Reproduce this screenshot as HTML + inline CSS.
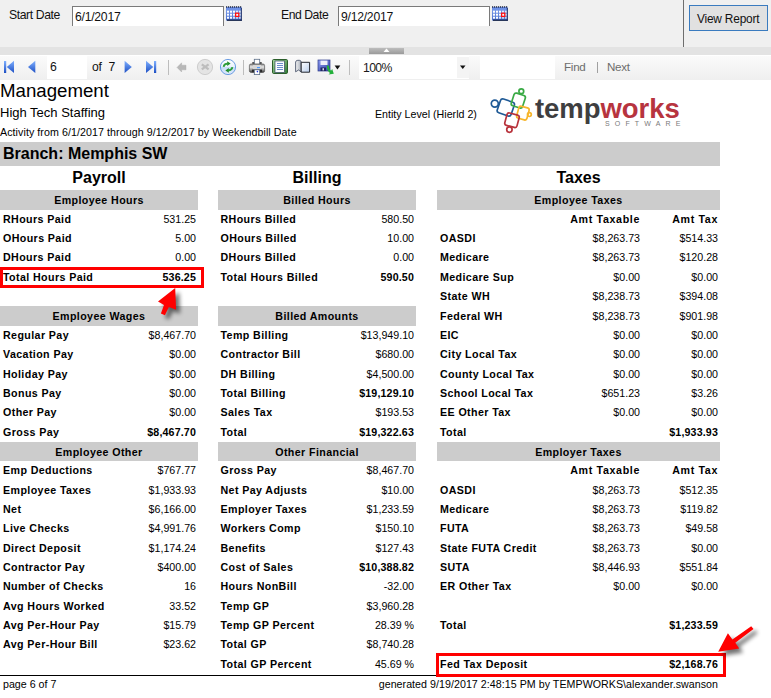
<!DOCTYPE html>
<html><head><meta charset="utf-8">
<style>
*{margin:0;padding:0;box-sizing:border-box}
html,body{width:771px;height:698px;overflow:hidden;background:#fff;font-family:"Liberation Sans",sans-serif;color:#000}
.a{position:absolute;white-space:nowrap}
#top{position:absolute;left:0;top:0;width:771px;height:47px;background:#f0f0f0}
#band{position:absolute;left:0;top:47px;width:771px;height:8px;background:#e3e3e3}
#tb{position:absolute;left:0;top:55px;width:771px;height:25px;background:linear-gradient(#fff 0,#fff 1px,#fbfbfb 1px,#efefef 100%)}
.ui{font-size:12.2px;color:#111;position:absolute;white-space:nowrap;line-height:14px;letter-spacing:-0.25px}
.inp{position:absolute;background:#fff;border:1px solid #7a7a7a;border-bottom:none}
.sep{position:absolute;width:1px;background:#c8c8c8}
.lb,.v,.hb{position:absolute;white-space:nowrap;font-size:10.67px;line-height:19.33px;height:19.33px}
.lb{font-weight:bold;letter-spacing:0.4px}
.v.b{font-weight:bold;letter-spacing:0.15px}
.v.b.h2{letter-spacing:0.65px}
.hb{background:#cccccc;font-weight:bold;text-align:center;letter-spacing:0.4px;line-height:20.6px}
.sec{position:absolute;font-weight:bold;font-size:16px;line-height:20px;text-align:center;white-space:nowrap}
.redbox{position:absolute;border:3px solid #ff0000}
</style></head><body>
<div id="top"></div>
<div id="band"></div>
<div id="tb"></div>
<!-- top params -->
<div class="ui" style="left:9px;top:8px;letter-spacing:-0.4px">Start Date</div>
<div class="inp" style="left:72px;top:6px;width:152px;height:20px"></div>
<div class="ui" style="left:75px;top:10px">6/1/2017</div>
<svg class="a" style="left:226px;top:6px" width="17" height="16" viewBox="0 0 17 16">
 <defs><linearGradient id="cg1" x1="0" y1="0" x2="0" y2="1"><stop offset="0" stop-color="#86a6ee"/><stop offset="1" stop-color="#4a70d0"/></linearGradient></defs>
 <rect x="0" y="1" width="15.5" height="13.5" fill="url(#cg1)"/>
 <rect x="0" y="1.2" width="15.5" height="2.6" fill="#6d90e6"/>
 <g fill="#101830"><rect x="0" y="0.3" width="1.2" height="1.3"/><rect x="2" y="0.3" width="1.2" height="1.3"/><rect x="4" y="0.3" width="1.2" height="1.3"/><rect x="6" y="0.3" width="1.2" height="1.3"/><rect x="8" y="0.3" width="1.2" height="1.3"/><rect x="10" y="0.3" width="1.2" height="1.3"/><rect x="12" y="0.3" width="1.2" height="1.3"/><rect x="14" y="0.3" width="1.2" height="1.3"/></g>
 <g fill="#fff"><rect x="1" y="4.7" width="2" height="2"/><rect x="4" y="4.7" width="2" height="2"/><rect x="7" y="4.7" width="2" height="2"/><rect x="10" y="4.7" width="2" height="2" opacity="0.8"/><rect x="13" y="4.7" width="2" height="2" opacity="0.8"/>
 <rect x="1" y="7.7" width="2" height="2"/><rect x="4" y="7.7" width="2" height="2"/><rect x="7" y="7.7" width="2" height="2"/><rect x="13" y="7.7" width="2" height="2" opacity="0.8"/>
 <rect x="1" y="10.7" width="2" height="2"/><rect x="4" y="10.7" width="2" height="2"/><rect x="7" y="10.7" width="2" height="2" opacity="0.8"/><rect x="10" y="10.7" width="2" height="2" opacity="0.7"/><rect x="13" y="10.7" width="2" height="2" opacity="0.7"/></g>
 <rect x="9.6" y="7.2" width="3.2" height="3.2" fill="#eef8ff" stroke="#ff1010" stroke-width="1.3"/>
 <rect x="1" y="13.6" width="14.8" height="1.2" fill="#0c1838"/>
 <rect x="14.8" y="2" width="1" height="12.8" fill="#1c2c60"/>
</svg>
<div class="ui" style="left:281px;top:8px;letter-spacing:-0.45px">End Date</div>
<div class="inp" style="left:338px;top:6px;width:152px;height:20px"></div>
<div class="ui" style="left:341px;top:10px">9/12/2017</div>
<svg class="a" style="left:492px;top:6px" width="17" height="16" viewBox="0 0 17 16">
 <defs><linearGradient id="cg2" x1="0" y1="0" x2="0" y2="1"><stop offset="0" stop-color="#86a6ee"/><stop offset="1" stop-color="#4a70d0"/></linearGradient></defs>
 <rect x="0" y="1" width="15.5" height="13.5" fill="url(#cg2)"/>
 <rect x="0" y="1.2" width="15.5" height="2.6" fill="#6d90e6"/>
 <g fill="#101830"><rect x="0" y="0.3" width="1.2" height="1.3"/><rect x="2" y="0.3" width="1.2" height="1.3"/><rect x="4" y="0.3" width="1.2" height="1.3"/><rect x="6" y="0.3" width="1.2" height="1.3"/><rect x="8" y="0.3" width="1.2" height="1.3"/><rect x="10" y="0.3" width="1.2" height="1.3"/><rect x="12" y="0.3" width="1.2" height="1.3"/><rect x="14" y="0.3" width="1.2" height="1.3"/></g>
 <g fill="#fff"><rect x="1" y="4.7" width="2" height="2"/><rect x="4" y="4.7" width="2" height="2"/><rect x="7" y="4.7" width="2" height="2"/><rect x="10" y="4.7" width="2" height="2" opacity="0.8"/><rect x="13" y="4.7" width="2" height="2" opacity="0.8"/>
 <rect x="1" y="7.7" width="2" height="2"/><rect x="4" y="7.7" width="2" height="2"/><rect x="7" y="7.7" width="2" height="2"/><rect x="13" y="7.7" width="2" height="2" opacity="0.8"/>
 <rect x="1" y="10.7" width="2" height="2"/><rect x="4" y="10.7" width="2" height="2"/><rect x="7" y="10.7" width="2" height="2" opacity="0.8"/><rect x="10" y="10.7" width="2" height="2" opacity="0.7"/><rect x="13" y="10.7" width="2" height="2" opacity="0.7"/></g>
 <rect x="9.6" y="7.2" width="3.2" height="3.2" fill="#eef8ff" stroke="#ff1010" stroke-width="1.3"/>
 <rect x="1" y="13.6" width="14.8" height="1.2" fill="#0c1838"/>
 <rect x="14.8" y="2" width="1" height="12.8" fill="#1c2c60"/>
</svg>
<div class="a" style="left:683px;top:0;width:1px;height:47px;background:#6e6e6e"></div>
<div class="a" style="left:689px;top:5px;width:79px;height:26px;background:#e1e1e1;border:1px solid #3a7bbf"></div>
<div class="ui" style="left:697px;top:11.5px;font-size:11.9px;letter-spacing:-0.2px">View Report</div>
<!-- grip -->
<div class="a" style="left:369px;top:48px;width:35px;height:6px;background:linear-gradient(#bdbdbd,#9a9a9a)"></div>
<svg class="a" style="left:383px;top:48px" width="7" height="4"><path d="M0.5 4 L3.5 0.5 L6.5 4Z" fill="#fff"/></svg>
<!-- toolbar -->
<div class="a" style="left:47px;top:55px;width:40px;height:24px;background:#fff"></div>
<div class="ui" style="left:50px;top:60px">6</div>
<div class="ui" style="left:92px;top:60px">of</div>
<div class="ui" style="left:108.5px;top:60px">7</div>
<svg class="a" style="left:0;top:55px" width="360" height="24" viewBox="0 55 360 24">
 <defs>
  <linearGradient id="bl" x1="0" y1="0" x2="0" y2="1"><stop offset="0" stop-color="#7fb0ff"/><stop offset="1" stop-color="#1d4fc4"/></linearGradient>
  <radialGradient id="rf" cx="0.5" cy="0.4" r="0.6"><stop offset="0" stop-color="#fff"/><stop offset="1" stop-color="#bcd6f5"/></radialGradient>
 </defs>
 <!-- first -->
 <rect x="4" y="61" width="2.2" height="12" fill="url(#bl)"/>
 <path d="M14 60.8 L6.8 66.9 L14 73 Z" fill="url(#bl)"/>
 <!-- prev -->
 <path d="M35.3 60.8 L28 66.9 L35.3 73 Z" fill="url(#bl)"/>
 <!-- next -->
 <path d="M124.6 60.8 L131.8 66.9 L124.6 73 Z" fill="url(#bl)"/>
 <!-- last -->
 <path d="M146 60.8 L153.3 66.9 L146 73 Z" fill="url(#bl)"/>
 <rect x="154" y="61" width="2.2" height="12" fill="url(#bl)"/>
 <rect x="168" y="60" width="1" height="15" fill="#bdbdbd"/>
 <!-- back -->
 <path d="M177 67.4 L181.6 62.8 L181.6 65.2 L186 65.2 L186 69.8 L181.6 69.8 L181.6 72 Z" fill="#b8b8b8" stroke="#a8a8a8" stroke-width="0.4"/>
 <!-- stop -->
 <circle cx="205" cy="67" r="7.6" fill="#e4e4e4" stroke="#cdcdcd" stroke-width="1"/>
 <path d="M201.8 64.4 L208.6 69.4 M208.6 64.4 L201.8 69.4" stroke="#bdbdbd" stroke-width="2.3"/>
 <!-- refresh -->
 <defs><linearGradient id="rg" x1="0" y1="0" x2="0" y2="1"><stop offset="0" stop-color="#ffffff"/><stop offset="0.5" stop-color="#e9f2fd"/><stop offset="0.5" stop-color="#c6ddf9"/><stop offset="1" stop-color="#dfeafb"/></linearGradient></defs>
 <circle cx="228" cy="67" r="7.6" fill="url(#rg)" stroke="#6b9de3" stroke-width="1"/>
 <path d="M223.6 66.8 Q224 63.8 227.6 63.6" fill="none" stroke="#2e9e3a" stroke-width="1.8"/>
 <path d="M227.2 61.2 L230.6 63.5 L227.2 65.9 Z" fill="#1f8f2c"/>
 <path d="M232.4 67.2 Q232 70.2 228.4 70.4" fill="none" stroke="#2e9e3a" stroke-width="1.8"/>
 <path d="M228.8 68 L225.4 70.4 L228.8 72.8 Z" fill="#1f8f2c"/>
 <rect x="243" y="60" width="1" height="15" fill="#bdbdbd"/>
 <!-- printer -->
 <defs><linearGradient id="pg" x1="0" y1="0" x2="0" y2="1"><stop offset="0" stop-color="#8a8a8a"/><stop offset="0.35" stop-color="#e6e6e6"/><stop offset="0.6" stop-color="#b0b0b0"/><stop offset="1" stop-color="#3a3a3a"/></linearGradient></defs>
 <rect x="252.3" y="62" width="9.4" height="3" fill="#555"/>
 <rect x="254.3" y="59.3" width="5.4" height="5" fill="#fff" stroke="#5d6f88" stroke-width="0.8"/>
 <rect x="249.4" y="64" width="15.2" height="8.4" rx="1.6" fill="url(#pg)" stroke="#555" stroke-width="0.7"/>
 <rect x="253" y="65" width="8" height="4" fill="#d8d8d8"/>
 <rect x="257" y="67" width="3" height="1.2" fill="#4f9bff"/>
 <rect x="252" y="69.6" width="10" height="2.6" fill="#2a2a2a"/>
 <rect x="254.3" y="69.8" width="5.4" height="4.8" fill="#fff" stroke="#5d6f88" stroke-width="0.8"/>
 <circle cx="257.4" cy="71.6" r="0.8" fill="#2233dd"/>
 <!-- page layout -->
 <defs><linearGradient id="gr" x1="0" y1="0" x2="1" y2="1"><stop offset="0" stop-color="#a8d8a0"/><stop offset="1" stop-color="#2f7a34"/></linearGradient>
 <linearGradient id="pb" x1="0" y1="0" x2="1" y2="1"><stop offset="0" stop-color="#ffffff"/><stop offset="1" stop-color="#b9cdeb"/></linearGradient>
 <linearGradient id="fl" x1="0" y1="0" x2="1" y2="1"><stop offset="0" stop-color="#8e9cf0"/><stop offset="1" stop-color="#3040a8"/></linearGradient></defs>
 <rect x="272.5" y="59.5" width="15" height="14" rx="1.2" fill="url(#gr)" stroke="#2b5e2b" stroke-width="1"/>
 <rect x="275" y="61" width="9.5" height="11.5" fill="#fafcff" stroke="#1f2f4f" stroke-width="0.6"/>
 <g fill="#5c80c4"><rect x="277" y="63" width="6" height="0.9"/><rect x="277" y="65" width="6" height="0.9"/><rect x="277" y="67" width="6" height="0.9"/><rect x="277" y="69" width="6" height="0.9"/></g>
 <!-- book -->
 <defs><linearGradient id="bk" x1="0" y1="0" x2="1" y2="0"><stop offset="0" stop-color="#f4f4f4"/><stop offset="1" stop-color="#a9b0bb"/></linearGradient></defs>
 <path d="M295.6 71.8 L295.6 62 Q295.9 60.3 297.8 60.3 L299.4 60.3 Q301 60.4 301.2 62 L301.2 72 L298.6 70 Z" fill="url(#bk)" stroke="#3b4660" stroke-width="0.8"/>
 <path d="M301.2 62.3 L309.6 62.3 L309.6 72.2 L301.2 72.2 Z" fill="url(#pb)" stroke="#23262e" stroke-width="1"/>
 <!-- save -->
 <rect x="318" y="60" width="12" height="11" fill="url(#fl)" stroke="#2b3a8a" stroke-width="0.7"/>
 <rect x="320.5" y="60.6" width="7" height="4.4" fill="#eef0fa"/>
 <rect x="320.5" y="67.5" width="5.5" height="3.5" fill="#1f2760"/>
 <rect x="322.5" y="68.2" width="1.5" height="2.2" fill="#d8dcf0"/>
 <path d="M326.8 65.5 L328.8 65.5 Q329 69.5 331 70.8 L332.2 69 L333.8 73.8 L328.6 74.6 L330 73 Q326.8 70.8 326.8 65.5 Z" fill="#22b03a"/>
 <path d="M334.6 65.6 L340.3 65.6 L337.45 69.4 Z" fill="#111"/>
 <rect x="349" y="60" width="1" height="15" fill="#bdbdbd"/>
</svg>
<div class="a" style="left:359px;top:56px;width:110px;height:23px;background:#fff"></div>
<div class="a" style="left:457px;top:57px;width:12px;height:21px;background:#f4f4f4"></div>
<svg class="a" style="left:459px;top:65px" width="8" height="5"><path d="M1 0.5 L6.5 0.5 L3.75 4 Z" fill="#111"/></svg>
<div class="ui" style="left:363px;top:61px;color:#1a1a1a;letter-spacing:-0.6px">100%</div>
<div class="a" style="left:480px;top:56px;width:75px;height:23px;background:#fff"></div>
<div class="ui" style="left:564px;top:60px;color:#6d6d6d;font-size:11.6px">Find</div>
<div class="a" style="left:597px;top:62px;width:1px;height:11px;background:#a0a0a0"></div>
<div class="ui" style="left:607px;top:60px;color:#6d6d6d;font-size:11.6px">Next</div>

<!-- report header -->
<div class="a" style="left:0;top:80px;font-size:18.67px;line-height:22px">Management</div>
<div class="a" style="left:0;top:105px;font-size:13px;line-height:16px">High Tech Staffing</div>
<div class="a" style="left:0;top:126px;font-size:10.67px;line-height:13px;letter-spacing:0.07px">Activity from 6/1/2017 through 9/12/2017 by Weekendbill Date</div>
<div class="a" style="left:375px;top:108px;font-size:10.67px;line-height:13px">Entity Level (Hierld 2)</div>
<svg class="a" style="left:486px;top:85px" width="50" height="50" viewBox="486 85 50 50">
 <g fill="none" stroke-width="1.7">
  <g stroke="#1f5a96">
   <rect x="-7.3" y="-7.3" width="14.6" height="14.6" rx="2.4" transform="translate(505.8 107.5) rotate(19)"/>
   <circle cx="494.8" cy="103.6" r="3.5"/>
  </g>
  <g stroke="#3aaa45">
   <rect x="-5.9" y="-6.6" width="11.8" height="13.2" rx="2.2" transform="translate(518.3 100.6) rotate(18)"/>
   <circle cx="521.3" cy="91.2" r="2.4"/>
  </g>
  <g stroke="#f7b52b">
   <rect x="-5.3" y="-6.2" width="10.6" height="12.4" rx="2.2" transform="translate(522.9 113.1) rotate(15)"/>
   <circle cx="529.4" cy="114.6" r="1.9"/>
  </g>
  <g stroke="#b8323b">
   <rect x="-6.3" y="-6.4" width="12.6" height="12.8" rx="2.2" transform="translate(512 120.2) rotate(15)"/>
   <circle cx="509.4" cy="129.6" r="2.7"/>
  </g>
 </g>
</svg>
<div class="a" style="left:535px;top:92px;font-size:27.5px;font-weight:bold;line-height:34px;letter-spacing:-0.05px"><span style="color:#3e3e40">temp</span><span style="color:#b7343f">works</span></div>
<div class="a" style="left:605px;top:119.5px;font-size:7px;line-height:8px;letter-spacing:5.15px;color:#7a7a7a">SOFTWARE</div>

<div class="a" style="left:0;top:142px;width:720px;height:24px;background:#cccccc"></div>
<div class="a" style="left:3px;top:144px;font-size:16px;font-weight:bold;line-height:20px">Branch: Memphis SW</div>
<div class="sec" style="left:0;top:168px;width:198px">Payroll</div>
<div class="sec" style="left:218px;top:168px;width:198px">Billing</div>
<div class="sec" style="left:437px;top:168px;width:283px">Taxes</div>
<div class="hb" style="left:0px;top:190px;height:20px;width:198px">Employee Hours</div>
<div class="lb" style="left:3px;top:209.80px">RHours Paid</div>
<div class="v" style="right:575px;top:209.80px">531.25</div>
<div class="lb" style="left:3px;top:229.14px">OHours Paid</div>
<div class="v" style="right:575px;top:229.14px">5.00</div>
<div class="lb" style="left:3px;top:248.48px">DHours Paid</div>
<div class="v" style="right:575px;top:248.48px">0.00</div>
<div class="lb" style="left:3px;top:267.82px">Total Hours Paid</div>
<div class="v b" style="right:575px;top:267.82px">536.25</div>
<div class="hb" style="left:0px;top:306px;height:20px;width:198px">Employee Wages</div>
<div class="lb" style="left:3px;top:325.84px">Regular Pay</div>
<div class="v" style="right:575px;top:325.84px">$8,467.70</div>
<div class="lb" style="left:3px;top:345.18px">Vacation Pay</div>
<div class="v" style="right:575px;top:345.18px">$0.00</div>
<div class="lb" style="left:3px;top:364.52px">Holiday Pay</div>
<div class="v" style="right:575px;top:364.52px">$0.00</div>
<div class="lb" style="left:3px;top:383.86px">Bonus Pay</div>
<div class="v" style="right:575px;top:383.86px">$0.00</div>
<div class="lb" style="left:3px;top:403.20px">Other Pay</div>
<div class="v" style="right:575px;top:403.20px">$0.00</div>
<div class="lb" style="left:3px;top:422.54px">Gross Pay</div>
<div class="v b" style="right:575px;top:422.54px">$8,467.70</div>
<div class="hb" style="left:0px;top:442px;height:19px;width:198px">Employee Other</div>
<div class="lb" style="left:3px;top:461.22px">Emp Deductions</div>
<div class="v" style="right:575px;top:461.22px">$767.77</div>
<div class="lb" style="left:3px;top:480.56px">Employee Taxes</div>
<div class="v" style="right:575px;top:480.56px">$1,933.93</div>
<div class="lb" style="left:3px;top:499.90px">Net</div>
<div class="v" style="right:575px;top:499.90px">$6,166.00</div>
<div class="lb" style="left:3px;top:519.24px">Live Checks</div>
<div class="v" style="right:575px;top:519.24px">$4,991.76</div>
<div class="lb" style="left:3px;top:538.58px">Direct Deposit</div>
<div class="v" style="right:575px;top:538.58px">$1,174.24</div>
<div class="lb" style="left:3px;top:557.92px">Contractor Pay</div>
<div class="v" style="right:575px;top:557.92px">$400.00</div>
<div class="lb" style="left:3px;top:577.26px">Number of Checks</div>
<div class="v" style="right:575px;top:577.26px">16</div>
<div class="lb" style="left:3px;top:596.60px">Avg Hours Worked</div>
<div class="v" style="right:575px;top:596.60px">33.52</div>
<div class="lb" style="left:3px;top:615.94px">Avg Per-Hour Pay</div>
<div class="v" style="right:575px;top:615.94px">$15.79</div>
<div class="lb" style="left:3px;top:635.28px">Avg Per-Hour Bill</div>
<div class="v" style="right:575px;top:635.28px">$23.62</div>
<div class="hb" style="left:218px;top:190px;height:20px;width:198px">Billed Hours</div>
<div class="lb" style="left:220.5px;top:209.80px">RHours Billed</div>
<div class="v" style="right:357px;top:209.80px">580.50</div>
<div class="lb" style="left:220.5px;top:229.14px">OHours Billed</div>
<div class="v" style="right:357px;top:229.14px">10.00</div>
<div class="lb" style="left:220.5px;top:248.48px">DHours Billed</div>
<div class="v" style="right:357px;top:248.48px">0.00</div>
<div class="lb" style="left:220.5px;top:267.82px">Total Hours Billed</div>
<div class="v b" style="right:357px;top:267.82px">590.50</div>
<div class="hb" style="left:218px;top:306px;height:20px;width:198px">Billed Amounts</div>
<div class="lb" style="left:220.5px;top:325.84px">Temp Billing</div>
<div class="v" style="right:357px;top:325.84px">$13,949.10</div>
<div class="lb" style="left:220.5px;top:345.18px">Contractor Bill</div>
<div class="v" style="right:357px;top:345.18px">$680.00</div>
<div class="lb" style="left:220.5px;top:364.52px">DH Billing</div>
<div class="v" style="right:357px;top:364.52px">$4,500.00</div>
<div class="lb" style="left:220.5px;top:383.86px">Total Billing</div>
<div class="v b" style="right:357px;top:383.86px">$19,129.10</div>
<div class="lb" style="left:220.5px;top:403.20px">Sales Tax</div>
<div class="v" style="right:357px;top:403.20px">$193.53</div>
<div class="lb" style="left:220.5px;top:422.54px">Total</div>
<div class="v b" style="right:357px;top:422.54px">$19,322.63</div>
<div class="hb" style="left:218px;top:442px;height:19px;width:198px">Other Financial</div>
<div class="lb" style="left:220.5px;top:461.22px">Gross Pay</div>
<div class="v" style="right:357px;top:461.22px">$8,467.70</div>
<div class="lb" style="left:220.5px;top:480.56px">Net Pay Adjusts</div>
<div class="v" style="right:357px;top:480.56px">$10.00</div>
<div class="lb" style="left:220.5px;top:499.90px">Employer Taxes</div>
<div class="v" style="right:357px;top:499.90px">$1,233.59</div>
<div class="lb" style="left:220.5px;top:519.24px">Workers Comp</div>
<div class="v" style="right:357px;top:519.24px">$150.10</div>
<div class="lb" style="left:220.5px;top:538.58px">Benefits</div>
<div class="v" style="right:357px;top:538.58px">$127.43</div>
<div class="lb" style="left:220.5px;top:557.92px">Cost of Sales</div>
<div class="v b" style="right:357px;top:557.92px">$10,388.82</div>
<div class="lb" style="left:220.5px;top:577.26px">Hours NonBill</div>
<div class="v" style="right:357px;top:577.26px">-32.00</div>
<div class="lb" style="left:220.5px;top:596.60px">Temp GP</div>
<div class="v" style="right:357px;top:596.60px">$3,960.28</div>
<div class="lb" style="left:220.5px;top:615.94px">Temp GP Percent</div>
<div class="v" style="right:357px;top:615.94px">28.39 %</div>
<div class="lb" style="left:220.5px;top:635.28px">Total GP</div>
<div class="v" style="right:357px;top:635.28px">$8,740.28</div>
<div class="lb" style="left:220.5px;top:654.62px">Total GP Percent</div>
<div class="v" style="right:357px;top:654.62px">45.69 %</div>
<div class="hb" style="left:437px;top:190px;height:20px;width:283px">Employee Taxes</div>
<div class="v b h2" style="right:131px;top:209.80px">Amt Taxable</div>
<div class="v b h2" style="right:53px;top:209.80px">Amt Tax</div>
<div class="lb" style="left:440px;top:229.14px">OASDI</div>
<div class="v" style="right:131px;top:229.14px">$8,263.73</div>
<div class="v" style="right:53px;top:229.14px">$514.33</div>
<div class="lb" style="left:440px;top:248.48px">Medicare</div>
<div class="v" style="right:131px;top:248.48px">$8,263.73</div>
<div class="v" style="right:53px;top:248.48px">$120.28</div>
<div class="lb" style="left:440px;top:267.82px">Medicare Sup</div>
<div class="v" style="right:131px;top:267.82px">$0.00</div>
<div class="v" style="right:53px;top:267.82px">$0.00</div>
<div class="lb" style="left:440px;top:287.16px">State WH</div>
<div class="v" style="right:131px;top:287.16px">$8,238.73</div>
<div class="v" style="right:53px;top:287.16px">$394.08</div>
<div class="lb" style="left:440px;top:306.50px">Federal WH</div>
<div class="v" style="right:131px;top:306.50px">$8,238.73</div>
<div class="v" style="right:53px;top:306.50px">$901.98</div>
<div class="lb" style="left:440px;top:325.84px">EIC</div>
<div class="v" style="right:131px;top:325.84px">$0.00</div>
<div class="v" style="right:53px;top:325.84px">$0.00</div>
<div class="lb" style="left:440px;top:345.18px">City Local Tax</div>
<div class="v" style="right:131px;top:345.18px">$0.00</div>
<div class="v" style="right:53px;top:345.18px">$0.00</div>
<div class="lb" style="left:440px;top:364.52px">County Local Tax</div>
<div class="v" style="right:131px;top:364.52px">$0.00</div>
<div class="v" style="right:53px;top:364.52px">$0.00</div>
<div class="lb" style="left:440px;top:383.86px">School Local Tax</div>
<div class="v" style="right:131px;top:383.86px">$651.23</div>
<div class="v" style="right:53px;top:383.86px">$3.26</div>
<div class="lb" style="left:440px;top:403.20px">EE Other Tax</div>
<div class="v" style="right:131px;top:403.20px">$0.00</div>
<div class="v" style="right:53px;top:403.20px">$0.00</div>
<div class="lb" style="left:440px;top:422.54px">Total</div>
<div class="v b" style="right:53px;top:422.54px">$1,933.93</div>
<div class="hb" style="left:437px;top:442px;height:19px;width:283px">Employer Taxes</div>
<div class="v b h2" style="right:131px;top:461.22px">Amt Taxable</div>
<div class="v b h2" style="right:53px;top:461.22px">Amt Tax</div>
<div class="lb" style="left:440px;top:480.56px">OASDI</div>
<div class="v" style="right:131px;top:480.56px">$8,263.73</div>
<div class="v" style="right:53px;top:480.56px">$512.35</div>
<div class="lb" style="left:440px;top:499.90px">Medicare</div>
<div class="v" style="right:131px;top:499.90px">$8,263.73</div>
<div class="v" style="right:53px;top:499.90px">$119.82</div>
<div class="lb" style="left:440px;top:519.24px">FUTA</div>
<div class="v" style="right:131px;top:519.24px">$8,263.73</div>
<div class="v" style="right:53px;top:519.24px">$49.58</div>
<div class="lb" style="left:440px;top:538.58px">State FUTA Credit</div>
<div class="v" style="right:131px;top:538.58px">$8,263.73</div>
<div class="v" style="right:53px;top:538.58px">$0.00</div>
<div class="lb" style="left:440px;top:557.92px">SUTA</div>
<div class="v" style="right:131px;top:557.92px">$8,446.93</div>
<div class="v" style="right:53px;top:557.92px">$551.84</div>
<div class="lb" style="left:440px;top:577.26px">ER Other Tax</div>
<div class="v" style="right:131px;top:577.26px">$0.00</div>
<div class="v" style="right:53px;top:577.26px">$0.00</div>
<div class="lb" style="left:440px;top:615.94px">Total</div>
<div class="v b" style="right:53px;top:615.94px">$1,233.59</div>
<div class="lb" style="left:440px;top:654.62px">Fed Tax Deposit</div>
<div class="v b" style="right:53px;top:654.62px">$2,168.76</div>
<div class="a" style="left:0;top:675px;width:720px;height:1px;background:#000"></div>
<div class="a" style="left:3px;top:678px;font-size:10.67px;line-height:13px">page 6 of 7</div>
<div class="a" style="right:53px;top:678px;font-size:10.67px;line-height:13px;letter-spacing:0.04px">generated 9/19/2017 2:48:15 PM by TEMPWORKS\alexander.swanson</div>
<div class="redbox" style="left:0;top:267px;width:204px;height:21px"></div>
<div class="redbox" style="left:436px;top:653px;width:290px;height:24px"></div>
<svg class="a" style="left:0;top:0" width="771" height="698">
 <defs><filter id="sh" x="-50%" y="-50%" width="200%" height="200%"><feGaussianBlur stdDeviation="2"/></filter></defs>
 <g transform="translate(4,4)" fill="#000" opacity="0.55" filter="url(#sh)">
  <path d="M175.2 288 L176.1 309.8 L168.9 306.9 L164.9 315.2 L160.9 313.5 L164 304.9 L158 301.5 Z"/>
  <path d="M718.2 651.8 L727.9 633.3 L732.4 639.5 L751.2 626.2 L753.5 629.1 L735.3 642.7 L739.2 648.5 Z"/>
 </g>
 <g fill="#ff0000">
  <path d="M175.2 288 L176.1 309.8 L168.9 306.9 L164.9 315.2 L160.9 313.5 L164 304.9 L158 301.5 Z"/>
  <path d="M718.2 651.8 L727.9 633.3 L732.4 639.5 L751.2 626.2 L753.5 629.1 L735.3 642.7 L739.2 648.5 Z"/>
 </g>
</svg>

</body></html>
